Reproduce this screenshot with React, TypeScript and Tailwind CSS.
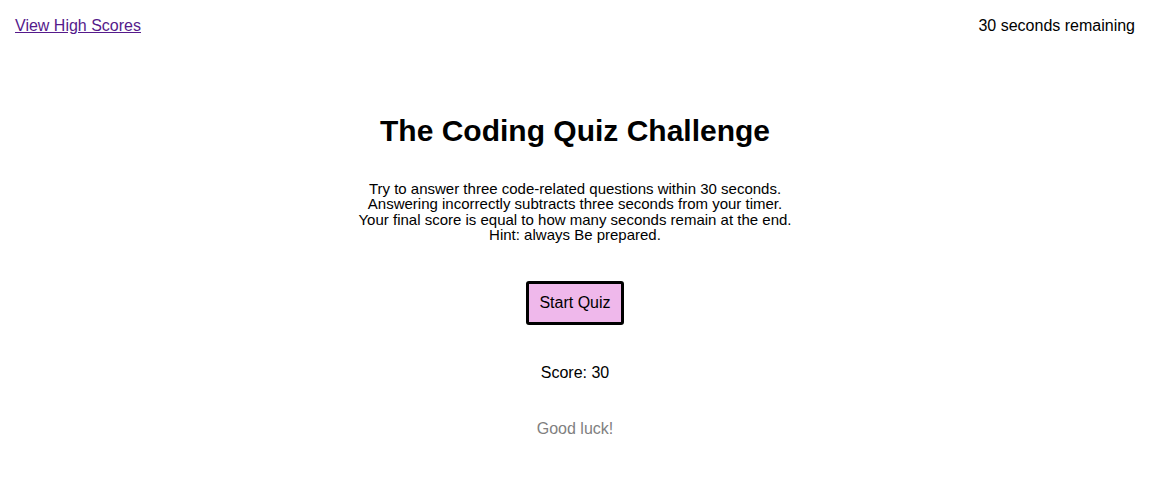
import React from "react";

export default function App() {
  return (
    <div className="min-h-[489px] w-[1150px] bg-white text-black" style={{ fontFamily: '"Liberation Sans", Arial, sans-serif' }}>
      <div className="flex items-start justify-between px-[15px] pt-[17px]">
        <a href="#" className="text-[16px] leading-[18px] text-[#551a8b] underline">View High Scores</a>
        <div className="text-[16px] leading-[18px]">30 seconds remaining</div>
      </div>
      <div className="flex flex-col items-center">
        <h1 className="mt-[80px] text-[30px] font-bold leading-[32px]">The Coding Quiz Challenge</h1>
        <p className="mt-[34px] text-center text-[15px] leading-[15.3px]">
          Try to answer three code-related questions within 30 seconds.
          <br />
          Answering incorrectly subtracts three seconds from your timer.
          <br />
          Your final score is equal to how many seconds remain at the end.
          <br />
          Hint: always Be prepared.
        </p>
        <button className="mt-[39px] h-[44px] w-[98px] rounded-[3px] border-[3px] border-black bg-[#efb8eb] text-[16px]">Start Quiz</button>
        <div className="mt-[39px] text-[16px] leading-[18px]">Score: 30</div>
        <div className="mt-[38px] text-[16px] leading-[18px] text-[#808080]">Good luck!</div>
      </div>
    </div>
  );
}
